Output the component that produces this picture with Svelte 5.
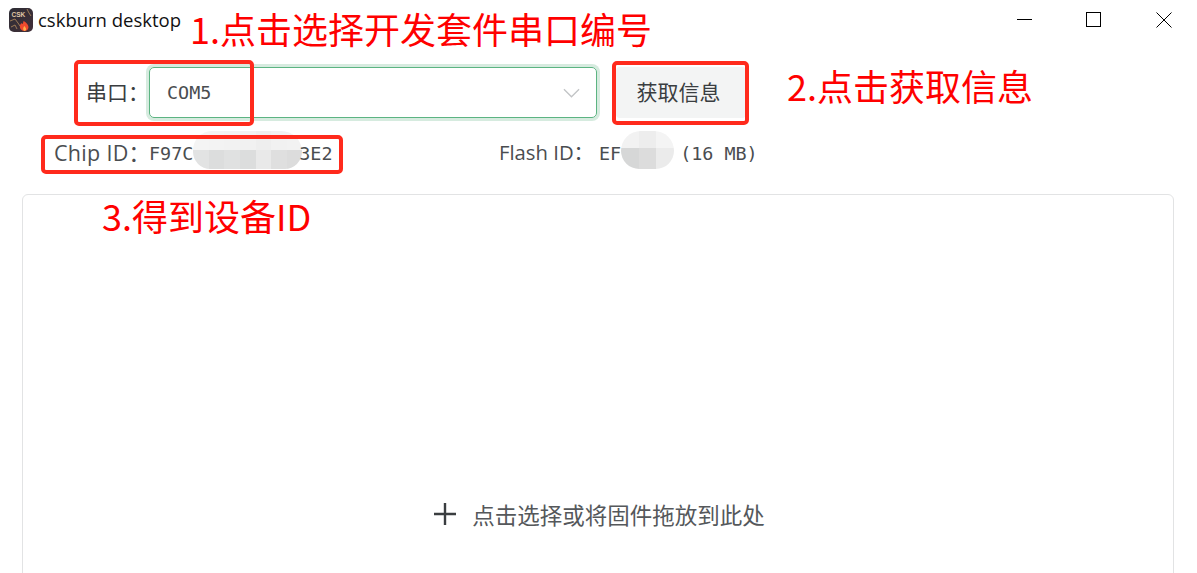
<script lang="ts">
  // mosaic used to hide part of the ids in the screenshot
  const chipMosaic: string[] = [
    '#f4f4f4', '#f3f3f3', '#f2f2f2', '#f1f1f1', '#eeeeee', '#f1f1f1', '#f2f2f2',
    '#e2e3e3', '#dcdddd', '#e0e1e1', '#dcdddd', '#e9e9e9', '#dfdfdf', '#dcdcdc',
  ];
  const flashMosaic: string[] = ['#f2f2f2', '#ededed', '#f4f4f4', '#d6d7d7', '#dcdcdc', '#ebebeb'];

  let port = $state('COM5');
</script>

<div class="window">
  <header class="titlebar">
    <svg class="logo" viewBox="0 0 24 24" aria-hidden="true">
      <defs>
        <linearGradient id="bg" x1="0" y1="0" x2="1" y2="1">
          <stop offset="0" stop-color="#2c2c34" />
          <stop offset="1" stop-color="#43303a" />
        </linearGradient>
      </defs>
      <rect width="24" height="24" rx="5" fill="url(#bg)" />
      <text x="2.5" y="8.5" class="logo-text">CSK</text>
      <path d="M1 13 L6 11 L9 15 L11 18 M18 1 L20 5 L22 8 M2 19 L6 17 L8 21" fill="none" stroke="#a8835a" stroke-width="0.9" />
      <path d="M15 23 C10 22 10 17 12.5 15 C13 16.5 14 16.5 14.5 13 C17 14 21 18 19 21 C18 22.5 17 23 15 23Z" fill="#ee4a2e" />
      <path d="M15.5 23 C13.5 22 14 19.5 15.5 18 C16.5 19.5 18 21 16.5 22.5Z" fill="#ffb04a" />
    </svg>
    <span class="app-name">cskburn desktop</span>
    <div class="window-controls">
      <svg class="ctl" viewBox="0 0 16 16" aria-hidden="true"><path d="M0 7.5H15" /></svg>
      <svg class="ctl" viewBox="0 0 16 16" aria-hidden="true"><rect x="0.5" y="0.5" width="14" height="14" /></svg>
      <svg class="ctl" viewBox="0 0 16 16" aria-hidden="true"><path d="M0.5 0.5L15.5 15.5M15.5 0.5L0.5 15.5" /></svg>
    </div>
  </header>

  <div class="form-row">
    <span class="field-label">串口：</span>
    <div class="select">
      <span class="select-value">{port}</span>
      <svg class="chevron" viewBox="0 0 18 10" aria-hidden="true"><path d="M1 1L9 9L17 1" /></svg>
    </div>
    <button class="info-btn">获取信息</button>
  </div>

  <div class="info-row">
    <div class="info chip">
      <span class="info-label chip-label">Chip ID：</span><span class="mono">F97C</span>
      <div class="mosaic chip-mosaic">
        {#each chipMosaic as color}
          <i style="background: {color}"></i>
        {/each}
      </div>
      <span class="mono chip-tail">3E2</span>
    </div>
    <div class="info flash">
      <span class="info-label flash-label">Flash ID：</span><span class="mono">EF</span>
      <div class="mosaic flash-mosaic">
        {#each flashMosaic as color}
          <i style="background: {color}"></i>
        {/each}
      </div>
      <span class="mono size">(16 MB)</span>
    </div>
  </div>

  <div class="dropzone">
    <svg class="plus" viewBox="0 0 22 22" aria-hidden="true"><path d="M0 11H22M11 0V22" /></svg>
    <span>点击选择或将固件拖放到此处</span>
  </div>

  <!-- annotations drawn on top of the screenshot -->
  <span class="note note-1">1.点击选择开发套件串口编号</span>
  <span class="note note-2">2.点击获取信息</span>
  <span class="note note-3">3.得到设备ID</span>
  <div class="mark mark-1"></div>
  <div class="mark mark-2"></div>
  <div class="mark mark-3"></div>
</div>

<style>
  :global(body) {
    margin: 0;
    background: #fff;
  }

  .window {
    position: relative;
    width: 1197px;
    height: 573px;
    overflow: hidden;
    background: #fff;
    color: #3a3d40;
    font-family: "Open Sans", "Noto Sans CJK SC", sans-serif;
  }

  .titlebar {
    display: flex;
    align-items: center;
    height: 41px;
    padding-left: 9px;
  }

  .logo {
    width: 24px;
    height: 24px;
    margin-top: -1px;
  }

  .logo-text {
    font-family: "Liberation Sans", sans-serif;
    font-size: 6.5px;
    font-weight: 700;
    fill: #e0c8a8;
  }

  .app-name {
    margin-left: 5px;
    font-size: 18.5px;
    color: #111;
    margin-top: -2px;
  }

  .window-controls {
    margin-left: auto;
    display: flex;
    gap: 53px;
    padding-right: 25px;
    padding-bottom: 1px;
  }

  .ctl {
    width: 16px;
    height: 16px;
    fill: none;
    stroke: #000;
    stroke-width: 1;
  }

  .ctl:last-child {
    margin-left: 1px;
  }

  .form-row {
    display: flex;
    align-items: center;
    height: 51px;
    margin-top: 26px;
    padding: 0 451px 0 87px;
  }

  .field-label {
    width: 62px;
    flex: none;
    white-space: nowrap;
    font-size: 21px;
    font-family: "Noto Sans CJK SC", sans-serif;
    margin-bottom: 4px;
    margin-left: -1px;
    margin-right: 1px;
  }

  .select {
    flex: 1;
    display: flex;
    align-items: center;
    justify-content: space-between;
    height: 51px;
    box-sizing: border-box;
    padding: 0 16px 0 17px;
    border: 1px solid #5cb482;
    border-radius: 5px;
    box-shadow: 0 0 0 3px #d6ebdf;
  }

  .select-value {
    font-family: "DejaVu Sans Mono", monospace;
    font-size: 18.4px;
    color: #4a4d50;
  }

  .chevron {
    width: 17px;
    height: 10px;
    fill: none;
    stroke: #c2c4c6;
    stroke-width: 1.4;
  }

  .info-btn {
    flex: none;
    width: 130px;
    height: 51px;
    margin-left: 19px;
    border: none;
    border-radius: 4px;
    background: #f3f4f4;
    color: #3a3d40;
    font-family: "Noto Sans CJK SC", sans-serif;
    font-size: 21px;
    line-height: 1;
    padding: 0 5px 3px 0;
  }

  .info-row {
    display: flex;
    align-items: center;
    height: 38px;
    margin-top: 16px;
    padding-left: 54px;
  }

  .info {
    display: flex;
    align-items: center;
    color: #4a4d50;
  }

  .chip {
    width: 445px;
  }

  .info-label {
    white-space: pre;
    margin-bottom: 4px;
  }

  .chip-label {
    width: 95px;
    font-size: 21.5px;
    letter-spacing: 0.3px;
  }

  .flash-label {
    width: 100px;
    font-size: 20.3px;
  }

  .mono {
    font-family: "DejaVu Sans Mono", monospace;
    font-size: 18.4px;
    color: #4a4d50;
    white-space: pre;
  }

  .chip-tail {
    margin-left: -3px;
  }

  .size {
    margin-left: 6px;
  }

  .mosaic {
    display: grid;
    height: 38px;
    flex: none;
    overflow: hidden;
    margin-bottom: 6px;
  }

  .mosaic i {
    display: block;
  }

  .chip-mosaic {
    grid-template-columns: repeat(7, 1fr);
    grid-template-rows: 19px 19px;
    width: 109px;
    border-radius: 22px 24px 20px 20px;
  }

  .flash-mosaic {
    grid-template-columns: repeat(3, 1fr);
    grid-template-rows: 17px 21px;
    width: 53px;
    border-radius: 26px 26px 24px 24px;
  }

  .dropzone {
    display: flex;
    align-items: flex-start;
    justify-content: center;
    gap: 16px;
    box-sizing: border-box;
    height: 420px;
    margin: 22px 23px 0 22px;
    padding-top: 304px;
    padding-left: 3px;
    border: 1px solid #e2e3e4;
    border-radius: 6px;
    font-family: "Noto Sans CJK SC", sans-serif;
    font-size: 22.5px;
    line-height: 30px;
    color: #55585b;
  }

  .plus {
    width: 22px;
    height: 22px;
    margin-top: 4px;
    fill: none;
    stroke: #3a3d40;
    stroke-width: 2.4;
  }

  .note {
    position: absolute;
    font-family: "Noto Sans CJK SC", sans-serif;
    font-size: 36px;
    line-height: 40px;
    color: #ff0000;
    white-space: nowrap;
  }

  .note-1 { left: 190px; top: 8px; }
  .note-2 { left: 787px; top: 65px; }
  .note-3 { left: 102px; top: 195px; }

  .mark {
    position: absolute;
    box-sizing: border-box;
    border: 4px solid #ff2a1c;
    border-radius: 5px;
  }

  .mark-1 { left: 74px; top: 60px; width: 180px; height: 66px; }
  .mark-2 { left: 41px; top: 135px; width: 302px; height: 39px; }
  .mark-3 { left: 612px; top: 61px; width: 137px; height: 64px; }
</style>
